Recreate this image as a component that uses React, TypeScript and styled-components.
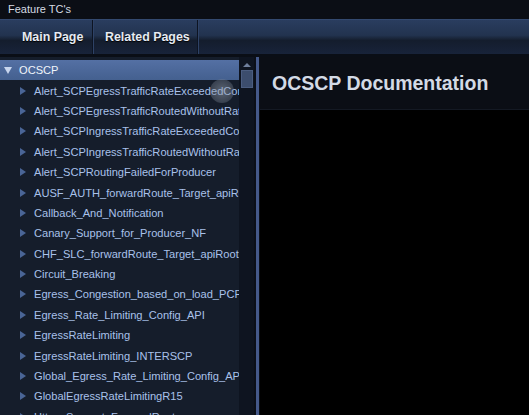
import styled, { createGlobalStyle } from 'styled-components';

const GlobalStyle = createGlobalStyle`
  html, body {
    margin: 0;
    padding: 0;
    background: #000;
    font-family: "Liberation Sans", Arial, sans-serif;
    overflow: hidden;
  }
`;

const Page = styled.div`
  width: 529px;
  height: 415px;
  display: flex;
  flex-direction: column;
  overflow: hidden;
  background: #000;
`;

const TitleBar = styled.div`
  height: 19px;
  flex: none;
  background: #0b0e15;
  color: #d6dbe3;
  font-size: 11px;
  line-height: 18px;
  padding-left: 8px;
`;

const NavBar = styled.nav`
  height: 34px;
  flex: none;
  display: flex;
  background: linear-gradient(#2a3d5f 0%, #22334f 45%, #141d2d 60%, #18233a 100%);
  border-top: 1px solid #33496f;
  border-bottom: 3px solid #0a0e16;
`;

const Tab = styled.a<{ $width: number; $pad: number }>`
  display: flex;
  align-items: center;
  box-sizing: border-box;
  width: ${({ $width }) => $width}px;
  padding-left: ${({ $pad }) => $pad}px;
  color: #e6ebf3;
  font-weight: bold;
  font-size: 12.4px;
  text-shadow: 0 1px 1px #000;
  border-right: 1px solid #0d1422;
  box-shadow: 1px 0 0 #2e4266;
`;

const Body = styled.div`
  flex: 1;
  display: flex;
  min-height: 0;
`;

const Sidebar = styled.aside`
  width: 239px;
  flex: none;
  background: #151d2b;
  display: flex;
  flex-direction: column;
  position: relative;
  overflow: hidden;
  padding-top: 3px;
`;

const Row = styled.div<{ $selected?: boolean }>`
  height: 20.4px;
  flex: none;
  display: flex;
  align-items: center;
  white-space: nowrap;
  font-size: 11.1px;
  color: ${({ $selected }) => ($selected ? '#f0f4fa' : '#a9c1ea')};
  background: ${({ $selected }) =>
    $selected ? 'linear-gradient(#5470a4, #44608f)' : 'transparent'};
  padding-left: ${({ $selected }) => ($selected ? '4px' : '20px')};
`;

const Arrow = styled.span<{ $open?: boolean }>`
  width: 0;
  height: 0;
  flex: none;
  margin-right: ${({ $open }) => ($open ? '7px' : '8px')};
  ${({ $open }) =>
    $open
      ? `border-left: 4px solid transparent;
         border-right: 4px solid transparent;
         border-top: 7px solid #c8d6ee;`
      : `border-top: 4px solid transparent;
         border-bottom: 4px solid transparent;
         border-left: 6px solid #4a6596;`}
`;

const Touch = styled.div`
  position: absolute;
  left: 210px;
  top: 22px;
  width: 24px;
  height: 24px;
  border-radius: 50%;
  background: radial-gradient(circle, rgba(150, 160, 175, 0.55), rgba(120, 130, 145, 0.35) 70%, rgba(120, 130, 145, 0) 100%);
`;

const Scrollbar = styled.div`
  width: 15px;
  flex: none;
  background: #0e1420;
  display: flex;
  flex-direction: column;
  align-items: center;
  padding-top: 6px;
`;

const UpArrow = styled.span`
  width: 0;
  height: 0;
  border-left: 4px solid transparent;
  border-right: 4px solid transparent;
  border-bottom: 4px solid #6f7f9c;
`;

const Thumb = styled.div`
  margin-top: 3px;
  width: 12px;
  height: 18px;
  background: #3c4d6d;
  border: 1px solid #4b5d80;
  box-sizing: border-box;
`;

const Splitter = styled.div`
  width: 6px;
  flex: none;
  background: #0b0f18;
  display: flex;
  justify-content: center;
  &::after {
    content: '';
    width: 3px;
    background: #45598a;
  }
`;

const Content = styled.main`
  flex: 1;
  display: flex;
  flex-direction: column;
  background: #000;
`;

const ContentHeader = styled.header`
  height: 52px;
  flex: none;
  background: #0b0e15;
  display: flex;
  align-items: center;
  padding-left: 12px;
  border-bottom: 1px solid #141923;
  h1 {
    margin: 0;
    font-size: 19.5px;
    font-weight: bold;
    color: #d3dae5;
  }
`;

const items = [
  'Alert_SCPEgressTrafficRateExceededConfiguredLimit',
  'Alert_SCPEgressTrafficRoutedWithoutRateLimitTreatment',
  'Alert_SCPIngressTrafficRateExceededConfiguredLimit',
  'Alert_SCPIngressTrafficRoutedWithoutRateLimitTreatment',
  'Alert_SCPRoutingFailedForProducer',
  'AUSF_AUTH_forwardRoute_Target_apiRoot',
  'Callback_And_Notification',
  'Canary_Support_for_Producer_NF',
  'CHF_SLC_forwardRoute_Target_apiRoot',
  'Circuit_Breaking',
  'Egress_Congestion_based_on_load_PCF',
  'Egress_Rate_Limiting_Config_API',
  'EgressRateLimiting',
  'EgressRateLimiting_INTERSCP',
  'Global_Egress_Rate_Limiting_Config_API',
  'GlobalEgressRateLimitingR15',
  'Https_Support_ForwardRoute',
];

export default function App() {
  return (
    <Page>
      <GlobalStyle />
      <TitleBar>Feature TC's</TitleBar>
      <NavBar>
        <Tab $width={93} $pad={22}>Main Page</Tab>
        <Tab $width={105} $pad={12}>Related Pages</Tab>
      </NavBar>
      <Body>
        <Sidebar>
          <Row $selected>
            <Arrow $open />
            OCSCP
          </Row>
          {items.map((name) => (
            <Row key={name}>
              <Arrow />
              {name}
            </Row>
          ))}
          <Touch />
        </Sidebar>
        <Scrollbar>
          <UpArrow />
          <Thumb />
        </Scrollbar>
        <Splitter />
        <Content>
          <ContentHeader>
            <h1>OCSCP Documentation</h1>
          </ContentHeader>
        </Content>
      </Body>
    </Page>
  );
}
